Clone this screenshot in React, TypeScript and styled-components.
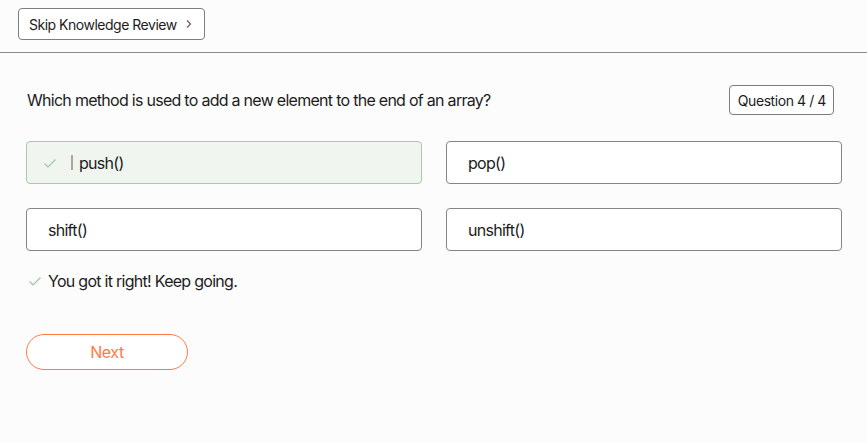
import React from "react";
import styled, { createGlobalStyle } from "styled-components";

const Global = createGlobalStyle`
  html, body { margin: 0; padding: 0; background: #fcfcfc; }
  body { font-family: Inter, "Liberation Sans", sans-serif; color: #1c1c1c; }
`;

const Page = styled.div`
  width: 867px;
  height: 443px;
  background: #fcfcfc;
  display: flex;
  flex-direction: column;
`;

const TopBar = styled.div`
  padding: 8px 18px 12px;
  border-bottom: 1px solid #8a8a8a;
  display: flex;
`;

const SkipButton = styled.button`
  height: 32px;
  box-sizing: border-box;
  padding: 0 11px 0 10px;
  border: 1px solid #7d7d7d;
  border-radius: 4px;
  background: #fff;
  font-family: inherit;
  font-size: 14px;
  letter-spacing: -0.035em;
  color: #1c1c1c;
  display: flex;
  align-items: center;
  gap: 8px;
`;

const Main = styled.div`
  padding: 32px 25px 0 26px;
  display: flex;
  flex-direction: column;
`;

const QuestionRow = styled.div`
  display: flex;
  justify-content: space-between;
  align-items: center;
`;

const QuestionText = styled.div`
  font-size: 16px;
  letter-spacing: -0.045em;
  padding-left: 1px;
`;

const Counter = styled.div`
  height: 30px;
  box-sizing: border-box;
  padding: 0 7px 0 8px;
  margin-right: 8px;
  border: 1px solid #7d7d7d;
  border-radius: 4px;
  background: #fff;
  font-size: 14px;
  letter-spacing: -0.03em;
  display: flex;
  align-items: center;
`;

const Options = styled.div`
  margin-top: 26px;
  display: grid;
  grid-template-columns: 396px 396px;
  column-gap: 24px;
  row-gap: 24px;
`;

const Option = styled.div<{ $correct?: boolean }>`
  height: 43px;
  box-sizing: border-box;
  border: 1px solid ${(p) => (p.$correct ? "#a6cca6" : "#858585")};
  background: ${(p) => (p.$correct ? "#f0f5f0" : "#ffffff")};
  border-radius: 4px;
  padding-left: ${(p) => (p.$correct ? "16px" : "21px")};
  display: flex;
  align-items: center;
  font-size: 16px;
  letter-spacing: -0.045em;
`;

const Bar = styled.span`
  width: 2px;
  height: 15px;
  background: #b4a39a;
  margin: 0 6px 0 14px;
`;

const Feedback = styled.div`
  margin-top: 20px;
  display: flex;
  align-items: center;
  gap: 6px;
  font-size: 16px;
  letter-spacing: -0.045em;
  padding-left: 2px;
`;

const NextButton = styled.button`
  margin-top: 43px;
  width: 162px;
  height: 36px;
  border: 1px solid #ff7a45;
  border-radius: 18px;
  background: #fff;
  color: #ff7a45;
  font-family: inherit;
  font-size: 16px;
  letter-spacing: -0.03em;
`;

const Check = ({ size = 14 }: { size?: number }) => (
  <svg width={size} height={size} viewBox="0 0 14 14" fill="none">
    <path d="M1.5 7.5 L5 11 L12.5 3.5" stroke="#9fc49f" strokeWidth="1.2" />
  </svg>
);

const Chevron = () => (
  <svg width="8" height="10" viewBox="0 0 8 10" fill="none">
    <path d="M2 1.5 L5.5 5 L2 8.5" stroke="#666" strokeWidth="1.3" />
  </svg>
);

export default function App() {
  return (
    <Page>
      <Global />
      <TopBar>
        <SkipButton>
          Skip Knowledge Review <Chevron />
        </SkipButton>
      </TopBar>
      <Main>
        <QuestionRow>
          <QuestionText>Which method is used to add a new element to the end of an array?</QuestionText>
          <Counter>Question 4 / 4</Counter>
        </QuestionRow>
        <Options>
          <Option $correct>
            <Check />
            <Bar />
            push()
          </Option>
          <Option>pop()</Option>
          <Option>shift()</Option>
          <Option>unshift()</Option>
        </Options>
        <Feedback>
          <Check />
          You got it right! Keep going.
        </Feedback>
        <div>
          <NextButton>Next</NextButton>
        </div>
      </Main>
    </Page>
  );
}
